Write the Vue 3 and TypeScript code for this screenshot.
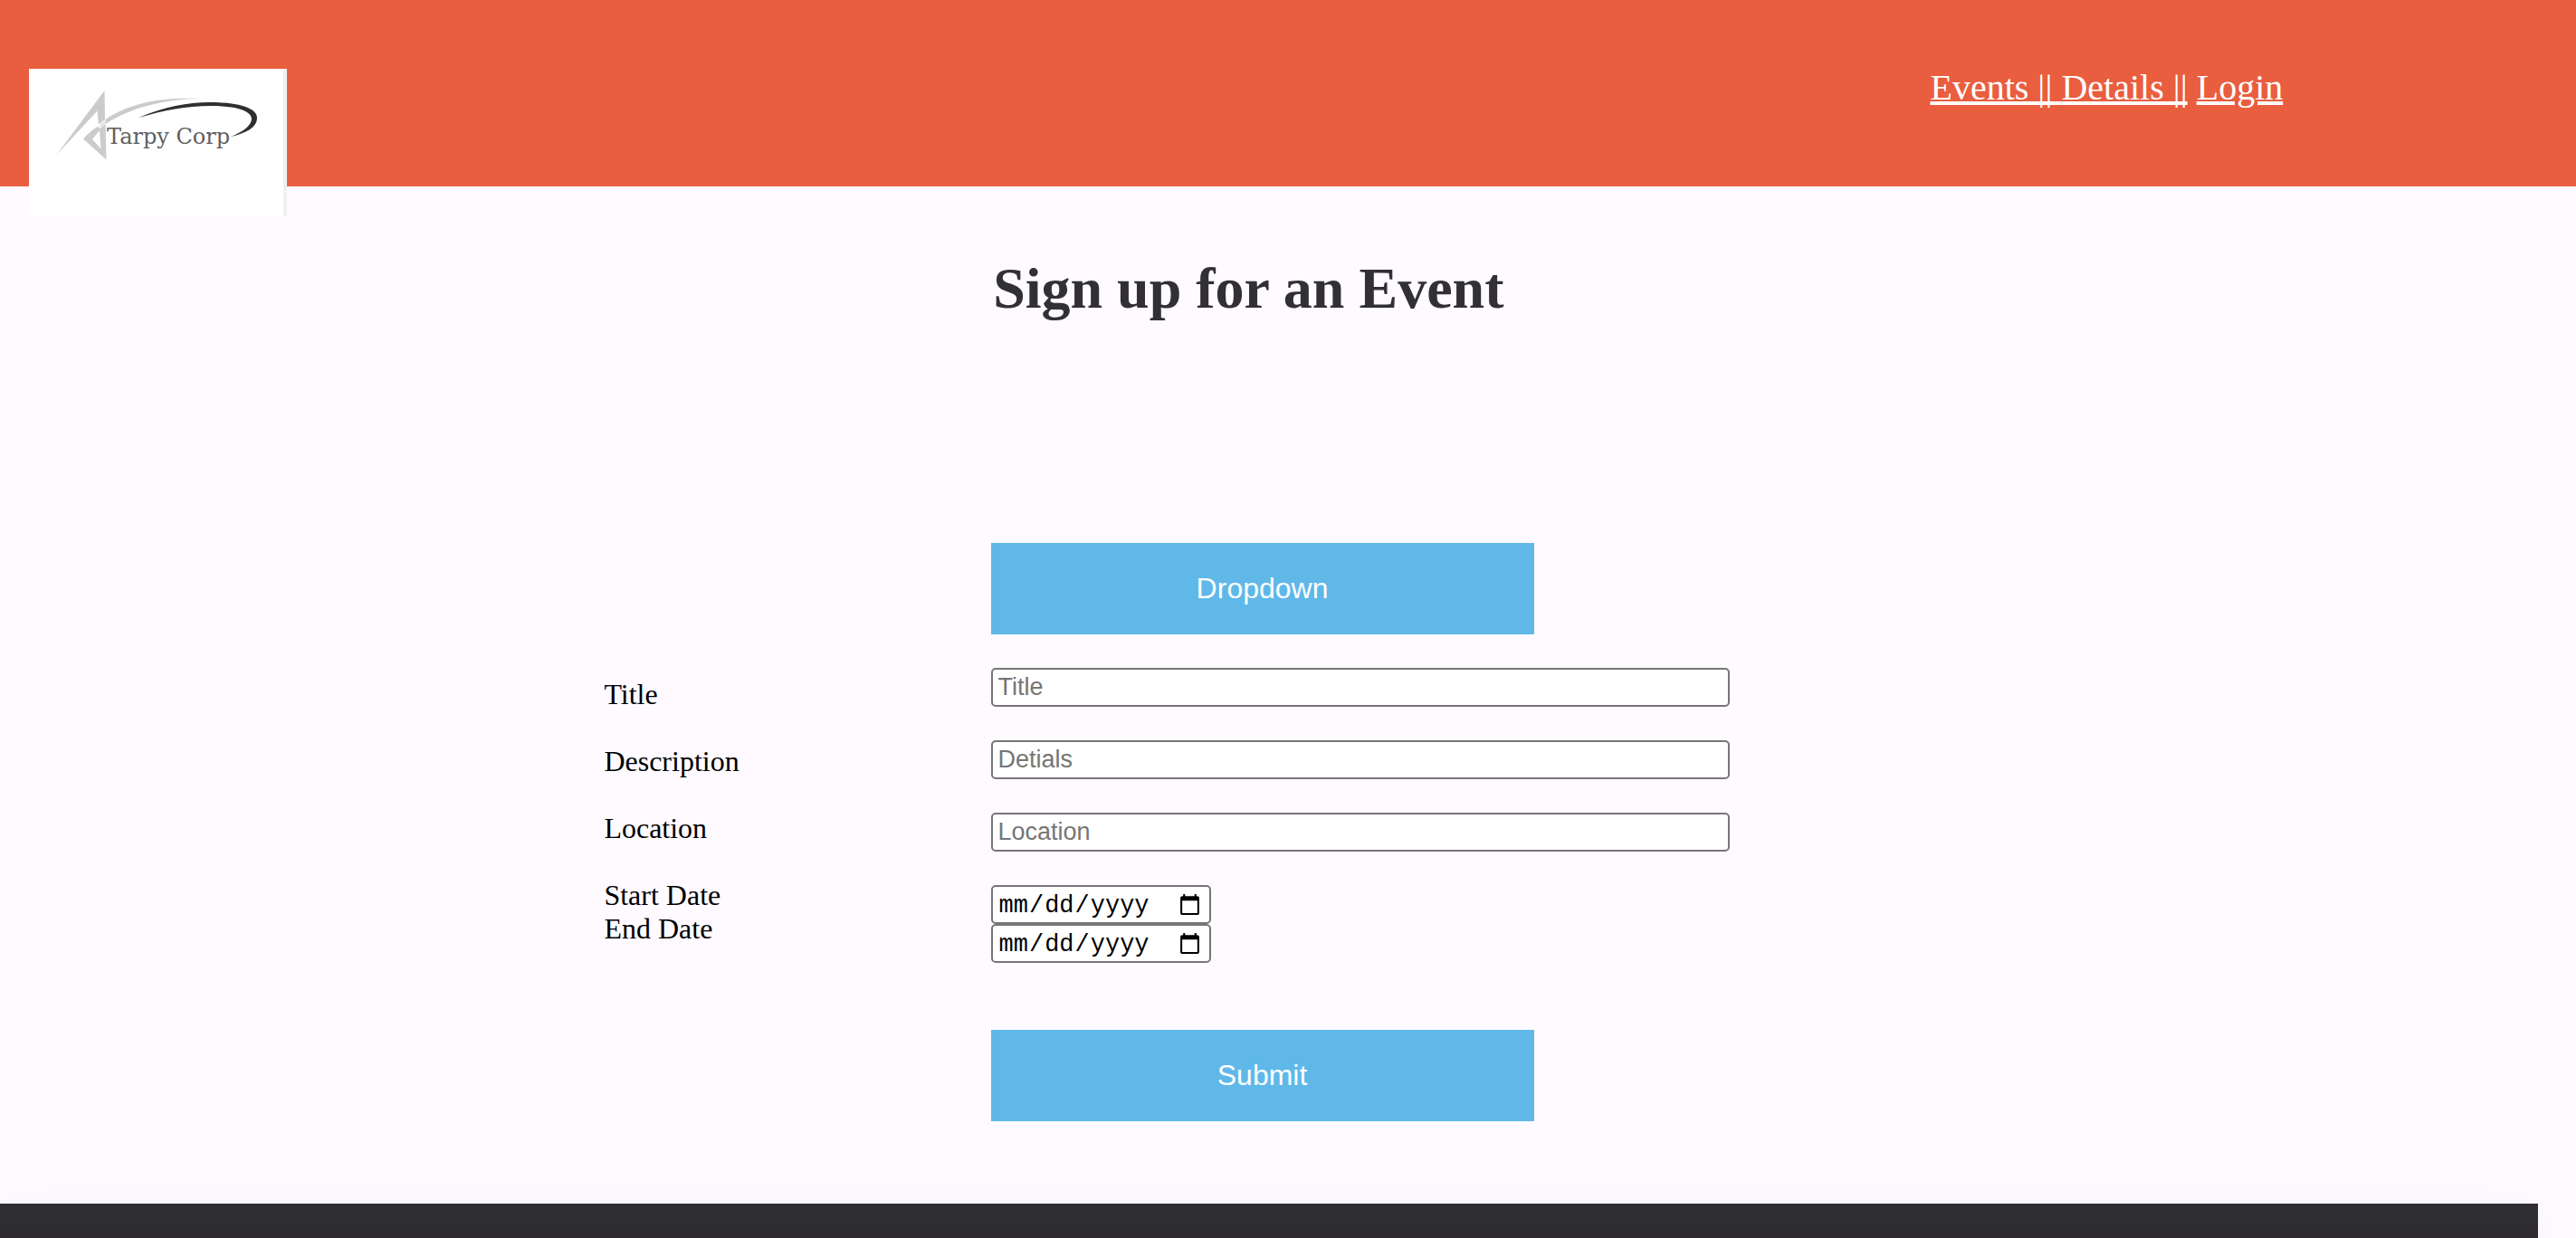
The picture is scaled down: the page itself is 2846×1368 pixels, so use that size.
<script setup lang="ts">
import { ref } from 'vue'

interface TextField {
  id: string
  label: string
  placeholder: string
}

const textFields: TextField[] = [
  { id: 'title', label: 'Title', placeholder: 'Title' },
  { id: 'description', label: 'Description', placeholder: 'Detials' },
  { id: 'location', label: 'Location', placeholder: 'Location' },
]

const dateFields = [
  { id: 'start', label: 'Start Date' },
  { id: 'end', label: 'End Date' },
]

const values = ref<Record<string, string>>({
  title: '',
  description: '',
  location: '',
  start: '',
  end: '',
})
</script>

<template>
  <div class="page">
    <header class="header">
      <div class="logo">
        <svg width="281" height="162" viewBox="0 0 281 162" role="img" aria-label="Tarpy Corp">
          <g fill="#cbcbcb">
            <path d="M83.5 24 L30.5 95 L75.5 46.5 L77 61.5 L84 56 Z" />
            <path fill-rule="evenodd" d="M60 77.5 Q68 68 76 64 L79 66 L84.5 61 L85.5 100.5 Z M70 78 L79.5 88.5 L78 68 Z" />
            <path d="M84.5 56 C112 37 148 31 190 33 C150 33.5 112 43 84.5 61 Z" />
          </g>
          <path d="M78 62 L84 57 L84 61 L79 66 Z" fill="#e6e6e6" />
          <path
            fill="#2f2f2f"
            d="M121 54 C150 42 175 37 200 37 C230 37 252 43 252 54 C252 65 240 71 223 75 C238 69 246 62 246 55 C245 46 228 41 201 41 C174 41 149 46 121 54 Z"
          />
          <text x="86" y="83" class="logo-text">Tarpy Corp</text>
        </svg>
      </div>
      <nav class="nav">
        <a href="#events" class="joined">Events || </a><a href="#details" class="joined">Details ||</a>&nbsp;<a href="#login">Login</a>
      </nav>
    </header>

    <main class="main">
      <h1 class="heading">Sign up for an Event</h1>
      <form class="form" @submit.prevent>
        <button type="button" class="action">Dropdown</button>
        <div class="labels">
          <label v-for="field in textFields" :key="field.id" :for="field.id" class="spaced">{{ field.label }}</label>
          <label v-for="field in dateFields" :key="field.id" :for="field.id">{{ field.label }}</label>
        </div>
        <div class="fields">
          <input
            v-for="field in textFields"
            :id="field.id"
            :key="field.id"
            v-model="values[field.id]"
            type="text"
            class="text-input"
            :placeholder="field.placeholder"
          />
          <input
            v-for="field in dateFields"
            :id="field.id"
            :key="field.id"
            v-model="values[field.id]"
            type="date"
            class="date-input"
          />
        </div>
        <button type="submit" class="action submit">Submit</button>
      </form>
    </main>

    <footer class="footer"></footer>
  </div>
</template>

<style>
body {
  background: #fefaff;
}
</style>

<style scoped>
.page {
  display: flex;
  flex-direction: column;
  min-height: 100vh;
  overflow: hidden;
  background: #fefaff;
  color: #000;
  font-family: "Liberation Serif", "Times New Roman", serif;
  font-size: 32px;
  line-height: 37px;
}

.header {
  display: grid;
  grid-template-columns: 3fr 1fr;
  align-items: start;
  padding-top: 74px;
  background: #e95e3f;
}

.logo {
  width: 281px;
  height: 162px;
  margin: 2px 0 -32px 32px;
  background: #fff;
  border-right: 4px solid #f0f0f1;
}

.logo svg {
  display: block;
}

.logo-text {
  font-family: "DejaVu Serif", serif;
  font-size: 24px;
  fill: #606060;
}

.nav {
  margin-left: -2px;
  font-size: 40px;
  line-height: 46px;
  white-space: nowrap;
  color: #fff;
}

.nav a {
  color: #fff;
  white-space: pre;
  text-decoration-thickness: 4px;
}

.nav .joined {
  text-decoration-skip-ink: none;
}

.heading {
  margin: 76px 0 0 38.55%;
  color: #303036;
  font-size: 64px;
  line-height: 74px;
}

.form {
  display: grid;
  grid-template-columns: 10fr 41fr;
  margin: 244px 0 0 23.45%;
}

.action {
  grid-column: 2;
  width: 600px;
  padding: 32px;
  border: 0;
  background: #60b8e8;
  color: #fff;
  font-family: "Liberation Sans", Arial, sans-serif;
  font-size: 32px;
  line-height: 37px;
  cursor: pointer;
}

.labels,
.fields {
  display: flex;
  flex-direction: column;
  align-items: flex-start;
}

.labels {
  padding-top: 48px;
}

.spaced {
  margin-bottom: 37px;
}

.fields {
  padding-top: 37px;
}

.text-input,
.date-input {
  box-sizing: border-box;
  height: 43px;
  padding: 2px 6px;
  border: 2px solid #767676;
  border-radius: 5px;
  background: #fff;
  color: #000;
  font-size: 27px;
}

.text-input {
  width: 816px;
  max-width: 100%;
  margin-bottom: 37px;
  font-family: "Liberation Sans", Arial, sans-serif;
}

.text-input::placeholder {
  color: #757575;
}

.date-input {
  width: 243px;
  padding-top: 4px;
  font-family: "Liberation Mono", "Courier New", monospace;
}

.submit {
  margin-top: 74px;
}

.footer {
  flex: 1;
  min-height: 38px;
  margin: 91px 42px 0 0;
  background: linear-gradient(#303034, #2c2a2f);
  box-shadow: 0 16px 60px rgba(0, 0, 0, 0.06);
}
</style>
